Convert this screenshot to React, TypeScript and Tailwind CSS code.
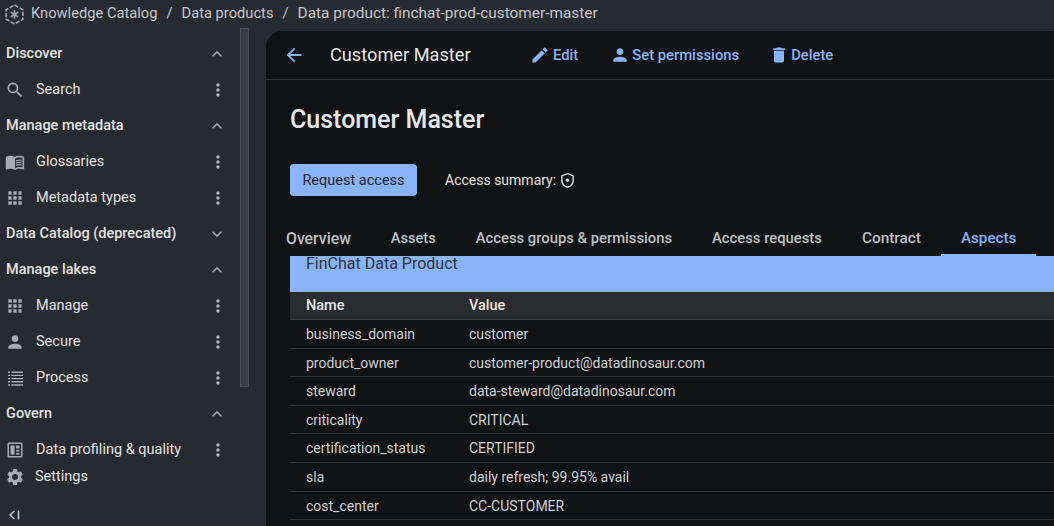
import { ReactNode } from "react";
import {
  MdSearch,
  MdMenuBook,
  MdApps,
  MdPerson,
  MdSettings,
  MdMoreVert,
  MdExpandLess,
  MdExpandMore,
  MdEdit,
  MdDelete,
  MdArrowBack,
} from "react-icons/md";

type NavEntry =
  | { kind: "head"; label: string; open: boolean }
  | { kind: "item"; label: string; icon: ReactNode };

const iconCls = "h-[20px] w-[20px]";

function ProcessIcon() {
  return (
    <svg viewBox="0 0 20 20" className={iconCls} fill="currentColor">
      <path d="M3 3.5h2v1.4H3zM6.5 3.5H18v1.4H6.5zM3 6.7h2v1.4H3zM6.5 6.7H18v1.4H6.5zM3 9.9h2v1.4H3zM6.5 9.9H18v1.4H6.5zM3 13.1h2v1.4H3zM6.5 13.1H18v1.4H6.5zM3 16.3h2v1.4H3zM6.5 16.3H18v1.4H6.5z" />
    </svg>
  );
}

function ProfilingIcon() {
  return (
    <svg viewBox="0 0 20 20" className={iconCls} fill="currentColor">
      <path
        fillRule="evenodd"
        d="M4 2.5h12A1.5 1.5 0 0 1 17.5 4v12a1.500 1.500 0 0 1-1.500 1.500H4A1.500 1.500 0 0 1 2.500 16V4A1.500 1.500 0 0 1 4 2.500zM4 4v12h12V4z"
      />
      <path d="M5.500 5.500h4v9h-4zM11 5.500h3.500v3H11zM11 10h3.500v1.500H11zM11 13h3.500v1.500H11z" />
    </svg>
  );
}

const NAV: NavEntry[] = [
  { kind: "head", label: "Discover", open: true },
  { kind: "item", label: "Search", icon: <MdSearch className={iconCls} /> },
  { kind: "head", label: "Manage metadata", open: true },
  { kind: "item", label: "Glossaries", icon: <MdMenuBook className={iconCls} /> },
  { kind: "item", label: "Metadata types", icon: <MdApps className={iconCls} /> },
  { kind: "head", label: "Data Catalog (deprecated)", open: false },
  { kind: "head", label: "Manage lakes", open: true },
  { kind: "item", label: "Manage", icon: <MdApps className={iconCls} /> },
  { kind: "item", label: "Secure", icon: <MdPerson className={iconCls} /> },
  { kind: "item", label: "Process", icon: <ProcessIcon /> },
  { kind: "head", label: "Govern", open: true },
  { kind: "item", label: "Data profiling & quality", icon: <ProfilingIcon /> },
];

const TABS = [
  { label: "Overview", size: "text-[15.8px]" },
  { label: "Assets", size: "text-[14.6px]" },
  { label: "Access groups & permissions", size: "text-[14.8px]" },
  { label: "Access requests", size: "text-[14.8px]" },
  { label: "Contract", size: "text-[15.4px]" },
  { label: "Aspects", size: "text-[15.2px]" },
];

const ROWS = [
  ["business_domain", "customer"],
  ["product_owner", "customer-product@datadinosaur.com"],
  ["steward", "data-steward@datadinosaur.com"],
  ["criticality", "CRITICAL"],
  ["certification_status", "CERTIFIED"],
  ["sla", "daily refresh; 99.95% avail"],
  ["cost_center", "CC-CUSTOMER"],
];

function Logo() {
  return (
    <svg viewBox="0 0 20 20" className="mt-[2px] h-[21px] w-[21px] text-[#a5a9ae]" fill="none" stroke="currentColor" strokeWidth="1.5">
      <path d="M10 1l8 4.500v9L10 19l-8-4.500v-9z" strokeDasharray="4 1.500" />
      <path d="M10 10V6M10 10l-3.500 2.200M10 10l3.500 2.200M10 10l-3.500-2.200M10 10l3.500-2.200M10 10v4" />
    </svg>
  );
}

function ShieldIcon() {
  return (
    <svg viewBox="0 0 18 18" className="ml-[3px] h-[17px] w-[17px] text-[#e3e3e3]" fill="none" stroke="currentColor" strokeWidth="1.500">
      <path d="M9 1.800l6 2.300v4.600c0 3.700-2.500 6.400-6 7.500-3.500-1.100-6-3.800-6-7.500V4.100z" />
      <circle cx="9" cy="8.800" r="1.800" fill="currentColor" stroke="none" />
    </svg>
  );
}

function NavRow({ entry }: { entry: NavEntry }) {
  if (entry.kind === "head") {
    return (
      <div className="flex h-9 items-center justify-between pl-[6px] pr-[13px]">
        <span className="text-[14.5px] font-medium text-[#e3e3e3]">{entry.label}</span>
        {entry.open ? (
          <MdExpandLess className="h-[20px] w-[20px] text-[#a8abb0]" />
        ) : (
          <MdExpandMore className="h-[20px] w-[20px] text-[#a8abb0]" />
        )}
      </div>
    );
  }
  return (
    <div className="flex h-9 items-center pl-[5px] pr-[12px]">
      <span className="flex w-[31px] text-[#a8abb0]">{entry.icon}</span>
      <span className="flex-1 text-[14.5px] text-[#e3e3e3]">{entry.label}</span>
      <MdMoreVert className="h-[20px] w-[20px] text-[#b4b7bb]" />
    </div>
  );
}

export default function App() {
  return (
    <div className="flex h-[526px] w-[1054px] flex-col overflow-hidden bg-[#282a31] font-['Roboto',sans-serif]">
      <header className="flex h-[27px] items-center pl-[4px] text-[14.7px] text-[#c4c7cc]">
        <Logo />
        <span className="ml-[6px]">Knowledge Catalog</span>
        <span className="mx-[9px]">/</span>
        <span>Data products</span>
        <span className="mx-[9px]">/</span>
        <span className="text-[15.4px]">Data product: finchat-prod-customer-master</span>
      </header>

      <div className="flex min-h-0 flex-1">
        <aside className="flex w-[266px] shrink-0">
          <div className="flex w-[240px] flex-col pt-[9px]">
            <nav>
              {NAV.map((n) => (
                <NavRow key={n.label} entry={n} />
              ))}
            </nav>
            <div className="flex h-[18px] items-center pl-[5px] text-[14.5px] text-[#e3e3e3]">
              <MdSettings className="h-[20px] w-[20px] text-[#a8abb0]" />
              <span className="ml-[10px]">Settings</span>
            </div>
            <div className="mt-[23px] flex pl-[8px] text-[#c4c7cc]">
              <svg viewBox="0 0 12 12" className="h-[12px] w-[12px]" fill="none" stroke="currentColor" strokeWidth="1.500">
                <path d="M6.500 2L2 6l4.500 4M10.500 1.500v9" />
              </svg>
            </div>
          </div>
          <div className="mt-[1px] h-[359px] w-[9px] border border-[#4b4d52] bg-[#3b3d42]" />
        </aside>

        <main className="mt-[4px] flex min-w-0 flex-1 flex-col rounded-tl-2xl bg-[#111213]">
          <div className="flex h-[49px] shrink-0 items-center border-b border-[#333539] pl-[17px] text-[14.8px] font-medium text-[#8ab4f8]">
            <MdArrowBack className="h-[22px] w-[22px]" />
            <h2 className="ml-[25px] w-[200px] text-[18.2px] font-normal text-[#e8eaed]">Customer Master</h2>
            <span className="flex items-center">
              <MdEdit className="mr-[3px] h-[20px] w-[20px]" /> Edit
            </span>
            <span className="ml-[32px] flex items-center">
              <MdPerson className="mr-[2px] h-[20px] w-[20px]" /> Set permissions
            </span>
            <span className="ml-[30px] flex items-center">
              <MdDelete className="mr-[2px] h-[20px] w-[20px]" /> Delete
            </span>
          </div>

          <h1 className="mt-[24px] pl-[24px] text-[25px] font-medium leading-[32px] text-[#e8eaed]">Customer Master</h1>

          <div className="mt-[28px] flex items-center pl-[24px]">
            <button className="h-[32px] w-[127px] rounded-[4px] bg-[#8ab4f8] pt-[1px] text-[14.5px] text-[#1a2433]">
              Request access
            </button>
            <span className="ml-[28px] text-[14px] text-[#e3e3e3]">Access summary:</span>
            <ShieldIcon />
          </div>

          <div className="mt-[22px] flex h-[38px] shrink-0 items-stretch">
            {TABS.map((t) => (
              <span
                key={t.label}
                className={`flex items-center px-[20px] pt-[5px] font-medium ${t.size} ${
                  t.label === "Aspects" ? "border-b-2 border-[#8ab4f8] text-[#8ab4f8]" : "border-b-2 border-transparent text-[#bdc1c6]"
                }`}
              >
                {t.label}
              </span>
            ))}
          </div>

          <div className="ml-[24px] flex min-h-0 flex-1 flex-col">
            <div className="h-[36px] shrink-0 bg-[#8ab4f8] pl-[16px] text-[16px] leading-[16px] text-[#2b3442]">
              FinChat Data Product
            </div>
            <div className="flex h-[28px] shrink-0 items-center border-b border-[#3a3c40] bg-[#2b2c2f] pl-[16px] pt-[1px] text-[14.5px] font-medium text-[#e8eaed]">
              <span className="w-[163px]">Name</span>
              <span>Value</span>
            </div>
            {ROWS.map(([name, value]) => (
              <div key={name} className="flex h-[28.6px] shrink-0 items-center border-b border-[#303236] pl-[16px] pt-[1.5px] text-[14px] text-[#cfd1d4]">
                <span className="w-[163px]">{name}</span>
                <span>{value}</span>
              </div>
            ))}
          </div>
        </main>
      </div>
    </div>
  );
}
